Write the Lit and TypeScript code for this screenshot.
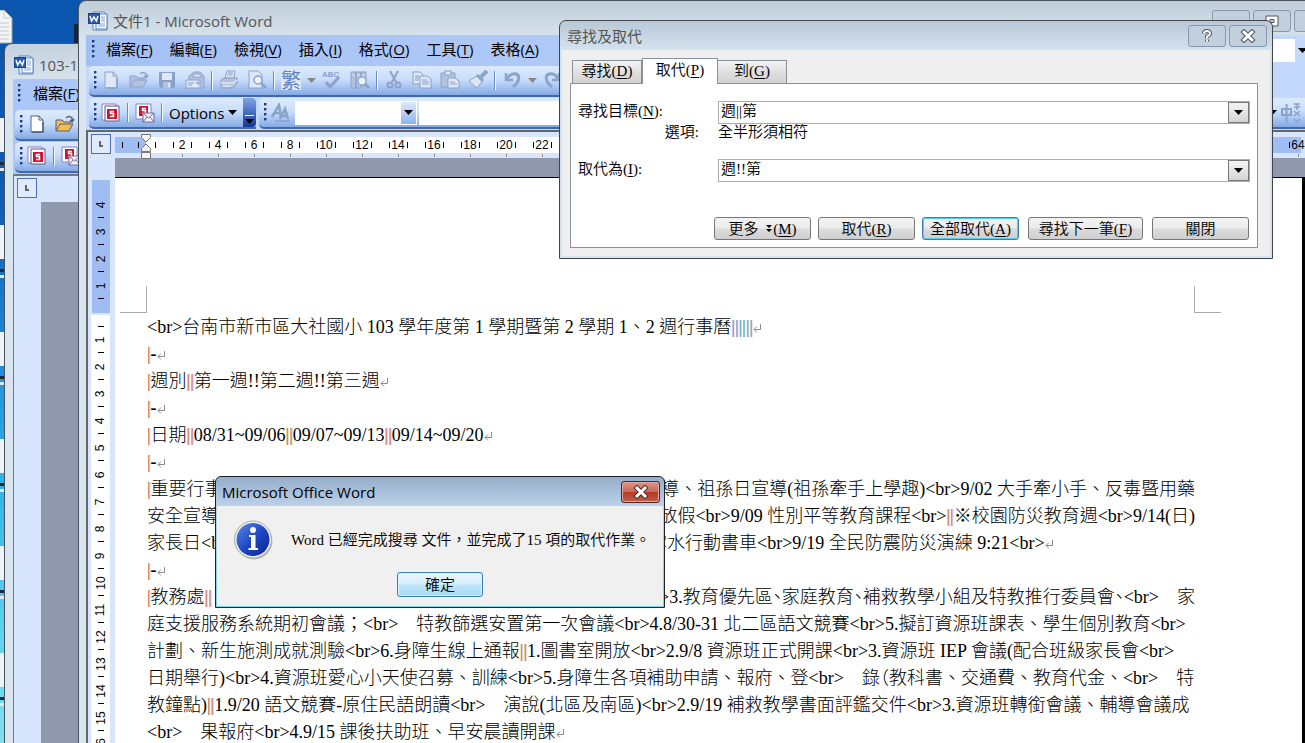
import { LitElement, html, svg, css, nothing } from "lit";
import { customElement, property } from "lit/decorators.js";

const ui = css`"Open Sans", "Noto Sans CJK TC", sans-serif`;

const chrome = css`
  * { box-sizing: border-box; }
  button { font: inherit; color: inherit; margin: 0; padding: 0; border: 0; background: none; white-space: nowrap; }
  input { font: inherit; color: inherit; margin: 0; border: 0; min-width: 0; background: #fff; }
  svg { display: block; }
  u { text-underline-offset: 2px; }
  .menu { display: flex; align-items: center; height: 31px; padding-bottom: 3px; background: #abc6f7; font: 400 15px/20px ${ui}; color: #000; }
  .grip { flex: none; width: 3px; height: 19px; background: radial-gradient(circle at 1px 1px, #1f3a7a 1px, transparent 2px) 0 0 / 3px 5px; }
  .bar { display: flex; align-items: center; height: 31px; padding: 0 0 1px 5px; border-bottom: 2px solid #3f68ad; border-radius: 5px 0 0 5px;
    background: linear-gradient(#dceafe, #c9defc 45%, #a4c2f1 75%, #84aae4); }
  .tool { flex: none; display: flex; align-items: center; justify-content: center; width: 28px; height: 24px; }
  .sep { flex: none; width: 2px; height: 19px; margin: 0 2px; border-left: 1px solid #6a8ccb; border-right: 1px solid #f1f9ff; }
  .mark { display: flex; width: 20px; height: 20px; border: 1px solid #4c6fb8; background: #dfeafd; padding: 6px 7px; }
  .mark i { width: 6px; height: 6px; border: solid #666; border-width: 0 0 2px 2px; }
`;

const wordIcon = html`<svg width="20" height="20" viewBox="0 0 20 20">
  <path d="M5 1h11l3 3v15H5z" fill="#e9f1fb" stroke="#5c85b8" />
  <path d="M8 3h11v15H8z" fill="#f8fbff" stroke="#5c85b8" />
  <path d="M13 6h4M13 8h4M13 10h4M10 13h7M10 15h7" stroke="#89a9d2" />
  <rect x="0.5" y="2.5" width="11" height="10" fill="#2a5db0" stroke="#1d4488" />
  <path d="M2 5l1.7 5L6 6l2.300 4L10 5" fill="none" stroke="#fff" stroke-width="1.500" />
</svg>`;

function art(name: string, live = false) {
  const l = live ? "#53607c" : "#8ba2c9";
  const f = live ? "#ffffff" : "#dfe7f4";
  const m = live ? "#f3bd4a" : "#b3c2dc";
  const shapes: Record<string, unknown> = {
    blank: svg`<path d="M4 2h8l4 4v12H4z" fill=${f} stroke=${l}/><path d="M12 2v4h4" fill="none" stroke=${l}/><path d="M5 18h11V8" fill="none" stroke=${l} stroke-width="1.500"/>`,
    open: svg`<path d="M1 17V6h6l2 2h6v3" fill=${m} stroke=${l}/><path d="M1 17l4-7h13l-4 7z" fill=${m} stroke=${l}/><path d="M11 4q3-3 6 0v3m-2-1l2 2 2-3" fill="none" stroke=${l} stroke-width="1.500"/>`,
    save: svg`<path d="M2 2h16v16H4l-2-2z" fill=${l}/><rect x="5" y="3" width="10" height="7" fill=${f}/><rect x="6" y="12" width="8" height="6" fill=${m}/><rect x="11" y="13" width="2" height="4" fill=${f}/>`,
    mail: svg`<path d="M4 10V6l5-4h6l4 4v12h-4" fill=${m} stroke=${l}/><path d="M7 7l3-3h4l3 3z" fill=${f} stroke=${l}/><path d="M1 10h14v8H1z" fill=${f} stroke=${l}/><path d="M3 13h6M3 15h4M12 12h2v2h-2z" fill="none" stroke=${l}/>`,
    print: svg`<path d="M6 8l2-7h8l-1 7z" fill=${f} stroke=${l}/><path d="M9 3h5M8.500 5h5" stroke=${l}/><path d="M2 10l3-2h13v6l-4 4H2z" fill=${m} stroke=${l}/><path d="M2 13h12l4-3M4 16h8" fill="none" stroke=${f} stroke-width="1.500"/>`,
    preview: svg`<path d="M2 1h9l4 4v13H2z" fill=${f} stroke=${l}/><circle cx="11" cy="10" r="4" fill="#eef3fb" stroke=${l} stroke-width="1.500"/><path d="M14 13l5 5" stroke=${l} stroke-width="2.500"/>`,
    spell: svg`<text x="0" y="7" font-family="Liberation Sans" font-weight="700" font-size="8" fill=${l}>ABC</text><path d="M4 12l4 5 9-10" fill="none" stroke=${l} stroke-width="3"/>`,
    research: svg`<path d="M1 2h5v16H1zM6 2h5v16H6zM11 2h5v14h-5z" fill=${m} stroke=${l}/><path d="M2 5h3M7 5h3M12 5h3" stroke=${f}/><circle cx="12" cy="11" r="4" fill="#eef3fb" stroke=${l}/><path d="M15 14l4 4" stroke=${l} stroke-width="2.500"/>`,
    cut: svg`<path d="M6 1l6 11M14 1L8 12" stroke=${l} stroke-width="2"/><circle cx="6" cy="15" r="2.500" fill="none" stroke=${l} stroke-width="2"/><circle cx="14" cy="15" r="2.500" fill="none" stroke=${l} stroke-width="2"/>`,
    copy: svg`<path d="M1 2h7l3 3v9H1z" fill=${f} stroke=${l}/><path d="M3 6h4M3 8h4M3 10h4" stroke=${l}/><path d="M8 6h7l4 3v9H8z" fill=${f} stroke=${l}/><path d="M10 10h5M10 12h7M10 14h7" stroke=${l}/>`,
    paste: svg`<path d="M1 3h14v14H1z" fill=${m} stroke=${l}/><path d="M5 1h6v4H5z" fill=${f} stroke=${l}/><path d="M8 8h7l4 3v7H8z" fill=${f} stroke=${l}/><path d="M10 12h5M10 14h7" stroke=${l}/>`,
    brush: svg`<path d="M19 1l-6 6" stroke=${l} stroke-width="4"/><path d="M1 11l9-6 5 5-6 8z" fill=${f} stroke=${l}/><path d="M9 5l6 6" stroke=${l} stroke-width="3"/>`,
    undo: svg`<path d="M4 3v7h7" fill="none" stroke=${l} stroke-width="2.500"/><path d="M5 9q3-6 9-5 5 2 1 9l-4 4" fill="none" stroke=${l} stroke-width="3"/>`,
    redo: svg`<path d="M16 3v7H9" fill="none" stroke=${l} stroke-width="2.500"/><path d="M15 9q-3-6-9-5-5 2-1 9l4 4" fill="none" stroke=${l} stroke-width="3"/>`,
    snag: svg`<path d="M1 1h14v16H1z" fill="#fff" stroke="#8a82b4"/><path d="M4 3h14v15H4z" fill="#fff" stroke="#5f568f"/><rect x="6" y="6" width="10" height="10" fill="#d01430"/><path d="M13 8.500h-3.500v2h3v3H9" fill="none" stroke="#fff" stroke-width="1.500"/>`,
    snagmail: svg`<path d="M1 1h15v15H1z" fill="#fff" stroke="#8a82b4"/><rect x="4" y="3" width="9" height="10" fill="#d01430"/><path d="M11 5.500H7.500v2h3v3H7" fill="none" stroke="#fff" stroke-width="1.500"/><path d="M8 10h11v9H8z" fill="#f4f4ff" stroke="#6d6a9c"/><path d="M8 10l5.500 5 5.500-5M8 19l4-5M19 19l-4-5" fill="none" stroke="#6d6a9c"/>`,
    styles: svg`<path d="M1 14L8 2l2 12M3 10h7" fill="none" stroke=${l} stroke-width="2.500"/><path d="M9 16l5-10 3 10M11 13h5" fill="none" stroke=${l} stroke-width="2.500"/><path d="M4 18h15" stroke=${l} stroke-width="1.500"/>`,
    layout: svg`<path d="M1 6h9v6H1zM5.500 1v18" fill="none" stroke=${l} stroke-width="2"/><path d="M13 1h6M13 4h6M16 1v6M13 8l6 5M19 8l-6 5M13 16l3 3 3-3" fill="none" stroke=${l} stroke-width="1.500"/>`,
  };
  return html`<svg width="20" height="20" viewBox="0 0 20 20">${shapes[name]}</svg>`;
}

const tool = (name: string, label: string, live = false) =>
  html`<button class="tool" aria-label=${label}>${art(name, live)}</button>`;

const arrow = (color = "#000") =>
  html`<svg width="9" height="5" viewBox="0 0 9 5"><path d="M0 0h9L4.500 5z" fill=${color} /></svg>`;

/* Text with its access key underlined, e.g. 檔案(F) */
const keyed = (text: string, key: string) => html`${text}(<u>${key}</u>)`;

@customElement("back-window")
class BackWindow extends LitElement {
  static styles = [chrome, css`
    :host { display: flex; flex-direction: column; border: 1px solid #4a5560; border-radius: 8px 0 0 0; padding-left: 8px;
      background: linear-gradient(#c3d2de, #d9e5ee 40px); overflow: hidden; }
    .title { flex: none; display: flex; align-items: center; gap: 5px; height: 35px; padding: 6px 0 0 1px; font: 400 15px/20px ${ui}; color: #555; white-space: nowrap; }
    .menu { flex: none; padding-left: 5px; gap: 12px; }
    .bar { flex: none; margin-left: 2px; margin-bottom: 1px; }
    .bars { background: #abc6f7; }
    .doc { flex: 1; display: grid; grid-template-columns: 27px 1fr; grid-template-rows: 26px 1fr; background: #d8e6fd; border-left: 1px solid #777; border-top: 2px solid #777; }
    .mark { margin: 2px 0 0 3px; }
    .canvas { grid-column: 2; grid-row: 2; background: #9098ae; }
  `];
  render() {
    return html`
      <div class="title">${wordIcon}<span>103-1</span></div>
      <div class="bars">
        <div class="menu"><i class="grip"></i><button>${keyed("檔案", "F")}</button></div>
        <div class="bar"><i class="grip"></i>${tool("blank", "新增", true)}${tool("open", "開啟", true)}</div>
        <div class="bar"><i class="grip"></i>${tool("snag", "SnagIt")}<i class="sep"></i>${tool("snagmail", "SnagIt mail")}</div>
      </div>
      <div class="doc"><span class="mark"><i></i></span><div class="canvas"></div></div>
    `;
  }
}

const pilcrow = html`<svg class="ret" width="8" height="9" viewBox="0 0 8 9"><path d="M7.500 0v5.500H1M4 2.500l-3 3 3 3" fill="none" stroke="#8a8a8a" /></svg>`;

/* A line of the document: vertical bars are tinted, "↵" is the paragraph mark, "（" is set half-width. */
const marks = (text: string, tone = "rust") =>
  text.split(/(\|+|↵|（)/).map((part) =>
    part === "↵" ? pilcrow
      : part === "（" ? html`<span class="half">${part}</span>`
      : part.startsWith("|") ? html`<span class=${tone}>${part}</span>` : part);

interface Line { text: string; tail?: string; kind?: string; tone?: string }

const lines: Line[] = [
  { text: "<br>台南市新市區大社國小 103 學年度第 1 學期暨第 2 學期 1、2 週行事曆||||||↵", tone: "sky" },
  { text: "|-↵", kind: "rule" },
  { text: "|週別||第一週!!第二週!!第三週↵" },
  { text: "|-↵", kind: "rule" },
  { text: "|日期||08/31~09/06||09/07~09/13||09/14~09/20↵" },
  { text: "|-↵", kind: "rule" },
  { text: "|重要行事", tail: ">導、祖孫日宣導(祖孫牽手上學趣)<br>9/02 大手牽小手、反毒暨用藥" },
  { text: "安全宣導", tail: "放假<br>9/09 性別平等教育課程<br>||※校園防災教育週<br>9/14(日)" },
  { text: "家長日<b", tail: "雲水行動書車<br>9/19 全民防震防災演練 9:21<br>↵", kind: "short" },
  { text: "|-↵", kind: "rule" },
  { text: "|教務處||", tail: ">3.教育優先區、家庭教育、補救教學小組及特教推行委員會、<br>　家", kind: "tight" },
  { text: "庭支援服務系統期初會議；<br>　特教篩選安置第一次會議<br>4.8/30-31 北二區語文競賽<br>5.擬訂資源班課表、學生個別教育<br>" },
  { text: "計劃、新生施測成就測驗<br>6.身障生線上通報||1.圖書室開放<br>2.9/8 資源班正式開課<br>3.資源班 IEP 會議(配合班級家長會<br>" },
  { text: "日期舉行)<br>4.資源班愛心小天使召募、訓練<br>5.身障生各項補助申請、報府、登<br>　錄（教科書、交通費、教育代金、<br>　特" },
  { text: "教鐘點)||1.9/20 語文競賽-原住民語朗讀<br>　演說(北區及南區)<br>2.9/19 補救教學書面評鑑交件<br>3.資源班轉銜會議、輔導會議成" },
  { text: "<br>　果報府<br>4.9/15 課後扶助班、早安晨讀開課↵" },
];

@customElement("word-window")
class WordWindow extends LitElement {
  static styles = [chrome, css`
    :host { display: flex; flex-direction: column; border: solid #4a5560; border-width: 1px 0 0 1px; border-radius: 8px 0 0 0; padding-left: 7px;
      background: linear-gradient(#c0cdd9, #d9e5ee 40px); overflow: hidden; }
    .title { flex: none; display: flex; align-items: center; gap: 5px; height: 34px; padding: 5px 0 0 2px; font: 400 15px/20px ${ui}; color: #555; }
    .title .frames { display: flex; align-self: flex-start; gap: 3px; margin: 4px -27px 0 auto; }
    .frames button { display: flex; align-items: center; justify-content: center; width: 38px; height: 22px; border: 1px solid #8797ae; border-radius: 3px; background: #c2d0de; }
    .bars { flex: none; background: #c3d8fb; padding-bottom: 1px; }
    .menu { padding-left: 6px; gap: 17px; background: linear-gradient(90deg, #a3c0f5, #c3d8fb); }
    .menu .grip { margin-right: -6px; }
    .ask { display: flex; align-items: center; height: 23px; width: 190px; margin: 3px -10px 0 auto; background: #fff; }
    .ask input { flex: 1; }
    .ask button { width: 20px; height: 23px; padding-left: 3px; background: #c3d8fb; }
    .bar { margin-left: 3px; }
    .std { margin-right: 60px; margin-bottom: 1px; }
    .row { display: flex; }
    .row .bar { padding-bottom: 0; }
    .row .bar:last-child { flex: 1; }
    .glyph { font: 400 20px/20px "Noto Sans CJK TC", sans-serif; color: #5f83c4; background: #dfe8f6; }
    .glyph.tool { width: 20px; height: 20px; margin: 0 4px; }
    .drop { width: 13px; display: flex; justify-content: center; }
    .options { display: flex; align-items: center; gap: 4px; padding: 0 6px 0 4px; font: 400 15px/20px ${ui}; color: #000; }
    .more { width: 13px; align-self: stretch; display: flex; flex-direction: column; align-items: center; justify-content: flex-end; gap: 3px; padding-bottom: 3px; background: linear-gradient(#7fa3e4, #11379a); border-radius: 0 4px 4px 0; }
    .more::before { content: ""; width: 9px; height: 1px; background: #fff; }
    .combo { display: flex; height: 24px; margin-right: 2px; background: #fff; }
    .combo input { flex: 1; padding: 0 4px; }
    .combo button { width: 15px; margin: 1px; display: flex; align-items: center; justify-content: center; background: linear-gradient(#dceafe, #8fb2ea); }
    .style { width: 122px; }
    .face { flex: 1; max-width: 850px; }
    .tail { display: flex; margin: 0 0 0 auto; align-items: center; }
    .doc { flex: 1; display: grid; grid-template-columns: 27px minmax(0, 1fr); grid-template-rows: 26px 1fr; min-height: 0; background: #d8e6fd; border: solid #666; border-width: 2px 0 0 2px; font: 12px/16px "Liberation Sans", sans-serif; color: #000; }
    .mark { margin: 2px 0 0 3px; }
    .hr { display: flex; position: relative; margin-top: 5px; }
    .hr .off { flex: none; width: 31px; height: 16px; background: #9fbdf3; display: flex; justify-content: space-around; align-items: center; }
    .hr .cell { flex: none; width: 36px; height: 20px; display: flex; justify-content: center; background: linear-gradient(#000, #000) 9px 5px / 1px 6px no-repeat, linear-gradient(#000, #000) 27px 5px / 1px 6px no-repeat, linear-gradient(#888, #888) 18px 17px / 1px 3px no-repeat; }
    .hr .track { display: flex; overflow: hidden; flex: 1; padding-left: 18px; background: linear-gradient(#000, #000) 9px 5px / 1px 6px no-repeat, linear-gradient(90deg, #fff 1049px, #9fbdf3 1049px, #9fbdf3 1155px, transparent 1155px) 0 0 / 100% 16px no-repeat; }
    .tick { width: 1px; height: 6px; background: #000; }
    .indent { position: absolute; left: 26px; top: -3px; }
    .vr { margin: 22px 5px 0 3px; display: flex; flex-direction: column; min-height: 0; overflow: hidden; }
    .vr .off { flex: none; margin: 0 0 2px 1px; height: 133px; padding-top: 11px; background: #9fbdf3; }
    .vr .on { flex: none; padding-top: 11px; background: linear-gradient(#000, #000) center 11px / 6px 1px no-repeat, #fff; }
    .num { position: relative; display: flex; align-items: center; justify-content: center; height: 27px; }
    .num span { transform: rotate(-90deg); }
    .num::after { content: ""; position: absolute; bottom: 0; width: 6px; height: 1px; background: #000; }
    .canvas { background: #9098ae; padding: 19px 0 0; overflow: hidden; display: flex; }
    .sheet { flex: 1; border-top: 1px solid #000; border-right: 3px solid #000; background: #fff; padding: 108px 0 0 5px; }
    .corners { display: flex; justify-content: space-between; width: 1101px; height: 27px; }
    .corners i { width: 27px; border: 0 solid #aaa; border-bottom-width: 1px; }
    .corners i:first-child { border-right-width: 1px; }
    .corners i:last-child { border-left-width: 1px; }
    .text { width: 1048px; margin: 1px 0 0 27px; font: 300 18px/27px "Liberation Serif", "Noto Sans CJK TC", serif; white-space: pre; color: #000; }
    .line { display: flex; height: 27px; }
    .line.two { justify-content: space-between; }
    .line.tight, .half { font-feature-settings: "halt"; }
    .line.two.short { justify-content: flex-start; }
    .line.short .lead { width: 502px; }
    .line.rule { font-weight: 700; }
    .rust { color: #d87f4e; text-shadow: 0 0 #d87f4e, 1px 0 #c4e4f6; font-weight: 400; }
    .sky { color: #6aa9d4; text-shadow: 0 0 #6aa9d4, 1px 0 #f3d5c2; }
    .ret { display: inline-block; }
  `];
  render() {
    return html`
      <div class="title">${wordIcon}<span>文件1 - Microsoft Word</span>
        <div class="frames">
          <button aria-label="最小化"></button>
          <button aria-label="還原"><svg width="14" height="12" viewBox="0 0 14 12"><path d="M1 1h12v10H1z" fill="#fff" stroke="#555" /><path d="M5 4.500h4v3H5z" fill="#c2d0de" stroke="#555" /></svg></button>
          <button aria-label="關閉"></button>
        </div>
      </div>
      <div class="bars">
        <div class="menu"><i class="grip"></i>
          ${[["檔案", "F"], ["編輯", "E"], ["檢視", "V"], ["插入", "I"], ["格式", "O"], ["工具", "T"], ["表格", "A"]].map(
            ([t, k]) => html`<button>${keyed(t, k)}</button>`)}
          <div class="ask"><input aria-label="輸入需要解答的問題" /><button aria-label="展開">${arrow()}</button></div>
        </div>
        <div class="bar std"><i class="grip"></i>
          ${tool("blank", "新增")}${tool("open", "開啟")}${tool("save", "儲存檔案")}${tool("mail", "郵寄")}<i class="sep"></i>
          ${tool("print", "列印")}${tool("preview", "預覽列印")}<i class="sep"></i>
          <button class="tool glyph">繁</button><button class="drop" aria-label="繁簡轉換選項">${arrow("#888")}</button>
          ${tool("spell", "拼字檢查")}${tool("research", "參考資料")}<i class="sep"></i>
          ${tool("cut", "剪下")}${tool("copy", "複製")}${tool("paste", "貼上")}${tool("brush", "複製格式")}<i class="sep"></i>
          ${tool("undo", "復原")}<button class="drop" aria-label="復原清單">${arrow("#888")}</button>${tool("redo", "取消復原")}
        </div>
        <div class="row">
          <div class="bar"><i class="grip"></i>${tool("snag", "SnagIt")}<i class="sep"></i>${tool("snagmail", "SnagIt mail")}<i class="sep"></i>
            <button class="options">Options ${arrow()}</button><button class="more" aria-label="工具列選項">${arrow()}</button></div>
          <div class="bar"><i class="grip"></i>${tool("styles", "樣式及格式")}
            <div class="combo style"><input aria-label="樣式" /><button aria-label="樣式清單">${arrow()}</button></div>
            <div class="combo face"><input aria-label="字型" /></div>
            <div class="tail">${arrow()}${tool("layout", "亞洲方式配置")}</div></div>
        </div>
      </div>
      <div class="doc">
        <span class="mark"><i></i></span>
        <div class="hr">
          <div class="off"><i class="tick"></i><i class="tick"></i></div>
          <div class="track">${Array.from({ length: 32 }, (_, i) => html`<span class="cell">${2 * i + 2}</span>`)}</div>
          <svg class="indent" width="10" height="26" viewBox="0 0 10 26"><path d="M.5.5h9v3L5 8 .5 3.500zM.5 17.500v-3L5 10l4.500 4.500v3zM.5 18.500h9v6h-9z" fill="#f4f4f4" stroke="#777" /></svg>
        </div>
        <div class="vr">
          <div class="off">${[4, 3, 2, 1].map((n) => html`<div class="num"><span>${n}</span></div>`)}</div>
          <div class="on">${Array.from({ length: 16 }, (_, i) => html`<div class="num"><span>${i + 1}</span></div>`)}</div>
        </div>
        <div class="canvas"><div class="sheet">
          <div class="corners"><i></i><i></i></div>
          <div class="text">${lines.map((l) => html`<div class="line ${l.kind ?? ""} ${l.tail ? "two" : ""}"><span class="lead">${marks(l.text, l.tone)}</span>${l.tail ? html`<span>${marks(l.tail)}</span>` : nothing}</div>`)}</div>
        </div></div>
      </div>
    `;
  }
}

const dialogText = css`"Liberation Serif", "Noto Sans CJK TC", serif`;

@customElement("replace-dialog")
class ReplaceDialog extends LitElement {
  static styles = [chrome, css`
    :host { display: flex; flex-direction: column; border: 1px solid #444; border-radius: 7px 7px 0 0; padding: 0 2px 2px; background: linear-gradient(#b9c8d6, #d5e3f0 30px); font: 350 15px/18px ${dialogText}; color: #000; box-sizing: border-box; }
    .title { display: flex; align-items: center; height: 29px; padding: 0 3px 0 5px; gap: 3px; font: 400 15px/20px ${ui}; color: #555; }
    .title span { flex: 1; }
    .title button { display: flex; align-items: center; justify-content: center; width: 38px; height: 22px; border: 1px solid #8797ae; border-radius: 3px; background: #c2d0de; }
    .body { flex: 1; display: flex; flex-direction: column; padding: 8px 12px 8px 8px; background: #efefef; }
    .tabs { display: flex; align-items: flex-end; padding-left: 2px; }
    .tabs button { height: 23px; width: 70px; padding-bottom: 2px; border: 1px solid #8e8f9a; border-bottom: 0; background: linear-gradient(#f3f3f3, #ddd 60%, #d2d2d2); }
    .tabs .on { width: 76px; height: 26px; margin: 0 -1px -1px 0; padding-bottom: 4px; background: #fff; position: relative; }
    .panel { flex: 1; display: flex; flex-direction: column; border: 1px solid #8e8f9a; background: #fff; padding: 17px 7px 7px 7px; }
    .form { display: grid; grid-template-columns: 140px 1fr; align-items: center; grid-template-rows: 22px 18px 18px 22px; }
    .form label { padding-bottom: 2px; }
    .form .lower { grid-row: 4; }
    .opt { justify-self: end; padding-right: 19px; }
    .combo { display: flex; height: 23px; border: 1px solid #abadb3; }
    .combo input { flex: 1; padding: 0 2px 3px; }
    .combo button { width: 21px; display: flex; align-items: center; justify-content: center; border: 1px solid #777; background: linear-gradient(#f4f4f4, #d4d4d4); }
    .actions { display: flex; justify-content: flex-end; margin-top: auto; padding-right: 1px; }
    .actions button { width: 97px; height: 23px; margin-left: 7px; border: 1px solid #777; border-radius: 3px; background: linear-gradient(#f3f3f3, #ebebeb 48%, #dcdcdc 52%, #cfcfcf); }
    .actions .def { border-color: #3c7fb1; box-shadow: inset 0 0 0 1px #4fd0f2; }
    .actions .wide { width: 115px; margin: 0 2px 0 9px; }
    .down { display: inline-block; margin: 0 1px 0 4px; }
  `];
  render() {
    return html`
      <div class="title"><span>尋找及取代</span>
        <button aria-label="說明"><svg width="14" height="16" viewBox="0 0 14 16"><path d="M4 5.500Q4 3 7 3t3 2.500Q10 7 7 8.500V10M7 11.500v2" fill="none" stroke="#4b5666" stroke-width="4" /><path d="M4 5.500Q4 3 7 3t3 2.500Q10 7 7 8.500V10M7 11.500v2" fill="none" stroke="#fff" stroke-width="2" /></svg></button>
        <button aria-label="關閉"><svg width="16" height="14" viewBox="0 0 16 14"><path d="M4 3l8 8M12 3l-8 8" stroke="#4b5666" stroke-width="5" stroke-linecap="square" /><path d="M4 3l8 8M12 3l-8 8" stroke="#fff" stroke-width="3" stroke-linecap="square" /></svg></button>
      </div>
      <div class="body">
        <div class="tabs" role="tablist">
          <button role="tab">${keyed("尋找", "D")}</button><button class="on" role="tab" aria-selected="true">${keyed("取代", "P")}</button><button role="tab">${keyed("到", "G")}</button>
        </div>
        <div class="panel">
          <div class="form">
            <label for="find">${keyed("尋找目標", "N")}:</label>
            <div class="combo"><input id="find" .value=${"週||第"} /><button aria-label="尋找記錄">${arrow()}</button></div>
            <span class="opt">選項:</span><span>全半形須相符</span>
            <label for="with" class="lower">${keyed("取代為", "I")}:</label>
            <div class="combo lower"><input id="with" .value=${"週!!第"} /><button aria-label="取代記錄">${arrow()}</button></div>
          </div>
          <div class="actions">
            <button>更多 <svg class="down" width="6" height="10" viewBox="0 0 6 10"><path d="M0 1h6L3 4zM0 5h6L3 8z" /></svg>(<u>M</u>)</button>
            <button>${keyed("取代", "R")}</button>
            <button class="def">${keyed("全部取代", "A")}</button>
            <button class="wide">${keyed("尋找下一筆", "F")}</button>
            <button>關閉</button>
          </div>
        </div>
      </div>
    `;
  }
}

@customElement("message-dialog")
class MessageDialog extends LitElement {
  @property() message = "";
  static styles = [chrome, css`
    :host { display: flex; flex-direction: column; border: 1px solid #222; border-radius: 6px 6px 0 0; padding: 0 1px 1px; background: linear-gradient(#95aecb, #bdd2ea 30px, #6fd5e8); font: 350 15px/20px ${dialogText}; color: #000; }
    .title { display: flex; align-items: center; justify-content: space-between; height: 29px; padding: 1px 3px 0 5px; font: 400 15px/20px ${ui}; }
    .title button { display: flex; align-items: center; justify-content: center; width: 39px; height: 22px; border: 1px solid #54211c; border-radius: 3px; box-shadow: inset 0 0 0 1px #e6a79c; background: linear-gradient(#dd9488, #c96a5b 48%, #b23b28 52%, #c0604c); }
    .body { flex: 1; background: #f0f0f0; display: flex; flex-direction: column; align-items: center; padding: 14px 17px 9px 17px; }
    .info { align-self: stretch; display: flex; align-items: center; gap: 18px; white-space: nowrap; }
    .info svg { flex: none; }
    .ok { width: 86px; height: 25px; margin-top: auto; border: 1px solid #3c7fb1; border-radius: 3px; box-shadow: inset 0 0 0 1px #d9f2fd; background: linear-gradient(#eaf6fd, #d5edfb 48%, #bce5fa 52%, #a7d9f5); }
  `];
  render() {
    return html`
      <div class="title"><span>Microsoft Office Word</span>
        <button aria-label="關閉"><svg width="16" height="14" viewBox="0 0 16 14"><path d="M4 3l8 8M12 3l-8 8" stroke="#53302c" stroke-width="5" stroke-linecap="square" /><path d="M4 3l8 8M12 3l-8 8" stroke="#fff" stroke-width="3" stroke-linecap="square" /></svg></button>
      </div>
      <div class="body">
        <div class="info">
          <svg width="39" height="40" viewBox="0 0 39 40">
            <defs><linearGradient id="g" x1="0" y1="0" x2="1" y2="1"><stop offset="0" stop-color="#5b8ae6" /><stop offset=".5" stop-color="#1d49c4" /><stop offset="1" stop-color="#0c2590" /></linearGradient></defs>
            <circle cx="20" cy="21" r="18.500" fill="#b8b8b8" /><circle cx="19" cy="19.500" r="18.500" fill="#eee" stroke="#aaa" /><circle cx="19" cy="19.500" r="16.500" fill="url(#g)" />
            <circle cx="19" cy="10" r="3" fill="#fff" /><path d="M15 15h6.500v13H24v2H14.500v-2H17V17h-2z" fill="#fff" />
          </svg>
          <span>${this.message}</span>
        </div>
        <button class="ok">確定</button>
      </div>
    `;
  }
}

@customElement("app-root")
class AppRoot extends LitElement {
  static styles = css`
    :host { display: block; position: relative; height: 100vh; overflow: hidden; background: linear-gradient(#0a55ae, #0d5cb8 200px, #1b87d8 340px, #2fb2ea 480px, #5fd3f0 640px, #7fe0ee); }
    .file { position: absolute; left: -20px; top: 10px; }
    .shelf { position: absolute; left: 0; top: 118px; width: 4px; height: 100%; background: repeating-linear-gradient(#eef3f8 0 34px, transparent 34px 44px, #1c2b3c 44px 47px, transparent 47px 50px, #dfe6ee 50px 53px, transparent 53px 107px); }
    .stub { position: absolute; left: 74px; top: 24px; width: 6px; height: 20px; background: #12243c; }
    back-window { position: absolute; left: 4px; top: 43px; width: 90px; bottom: -2px; }
    word-window { position: absolute; left: 78px; top: 0; right: 0; bottom: 0; }
    replace-dialog { position: absolute; left: 559px; top: 20px; width: 714px; height: 239px; }
    message-dialog { position: absolute; left: 215px; top: 476px; width: 450px; height: 132px; box-sizing: border-box; }
  `;
  render() {
    return html`
      <svg class="file" width="33" height="34" viewBox="0 0 33 34"><path d="M0 0h24l8 8v25H0z" fill="#f3f5f7" stroke="#9aa" /><path d="M24 0v8h8M0 13h29M0 17h29M0 21h29M0 25h29M0 29h29" fill="none" stroke="#c3cbd2" /></svg>
      <div class="shelf"></div><div class="stub"></div>
      <back-window></back-window>
      <word-window></word-window>
      <replace-dialog></replace-dialog>
      <message-dialog .message=${"Word 已經完成搜尋 文件，並完成了15 項的取代作業。"}></message-dialog>
    `;
  }
}
